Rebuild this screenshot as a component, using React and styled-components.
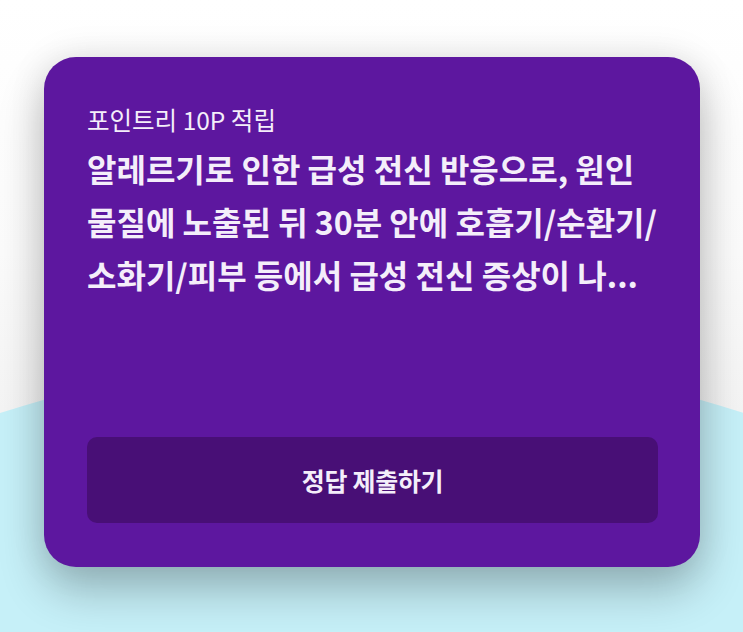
import React from "react";
import styled, { createGlobalStyle } from "styled-components";

const Global = createGlobalStyle`
  html, body { margin: 0; padding: 0; }
  body {
    background: #ffffff;
    font-family: "Noto Sans CJK KR", "Noto Sans", sans-serif;
  }
`;

const Page = styled.div`
  position: relative;
  width: 743px;
  height: 632px;
  overflow: hidden;
  background: linear-gradient(#ffffff 0%, #fbfbfb 40%, #f4f4f4 65%);
`;

const Backdrop = styled.div`
  position: absolute;
  left: 50%;
  top: 354px;
  width: 2400px;
  height: 2400px;
  margin-left: -1200px;
  border-radius: 50%;
  background: #c6f0f8;
`;

const Card = styled.section`
  position: relative;
  margin: 57px 0 0 44px;
  width: 656px;
  height: 510px;
  box-sizing: border-box;
  padding: 47px 42px 44px 43px;
  border-radius: 32px;
  background: #5d179f;
  box-shadow: 0 24px 46px rgba(0, 0, 0, 0.24), 0 0 36px rgba(0, 0, 0, 0.1);
  display: flex;
  flex-direction: column;
  color: #f4eefa;
`;

const Subtitle = styled.div`
  font-size: 24.5px;
  line-height: 32px;
  font-weight: 400;
  letter-spacing: 0;
`;

const Title = styled.h2`
  margin: 6px 0 0;
  font-size: 32px;
  line-height: 53px;
  font-weight: 700;
  letter-spacing: 0;
  white-space: nowrap;
`;

const Line = styled.span`
  display: block;
`;

const SubmitButton = styled.button`
  margin-top: auto;
  height: 86px;
  width: 100%;
  border: none;
  border-radius: 10px;
  background: #480f76;
  color: #f4eefa;
  font-family: "Noto Sans CJK KR", "Noto Sans", sans-serif;
  font-size: 25px;
  font-weight: 700;
  letter-spacing: -0.3px;
  cursor: pointer;
`;

export default function App() {
  return (
    <>
      <Global />
      <Page>
        <Backdrop />
        <Card>
          <Subtitle>포인트리 10P 적립</Subtitle>
          <Title>
            <Line>알레르기로 인한 급성 전신 반응으로, 원인</Line>
            <Line>물질에 노출된 뒤 30분 안에 호흡기/순환기/</Line>
            <Line>소화기/피부 등에서 급성 전신 증상이 나...</Line>
          </Title>
          <SubmitButton>정답 제출하기</SubmitButton>
        </Card>
      </Page>
    </>
  );
}
